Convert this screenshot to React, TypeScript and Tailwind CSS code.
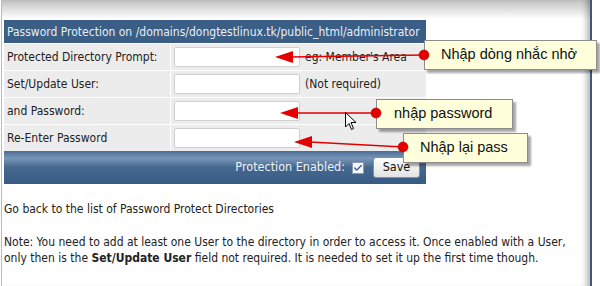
import { Check } from 'lucide-react';

const rows = [
  { label: 'Protected Directory Prompt:', note: "eg: Member's Area" },
  { label: 'Set/Update User:', note: '(Not required)' },
  { label: 'and Password:', note: '' },
  { label: 'Re-Enter Password', note: '' },
];

function Callout({ text, className }: { text: string; className: string }) {
  return (
    <div
      className={`absolute h-[30px] flex items-center bg-[#ffffdc] border border-[#8c8c8c] shadow-[3px_3px_2px_rgba(0,0,0,0.35)] font-['Liberation_Sans',Arial,sans-serif] text-[14.5px] text-[#111] ${className}`}
    >
      {text}
    </div>
  );
}

export default function App() {
  return (
    <div className="relative w-[600px] h-[286px] overflow-hidden bg-white font-['DejaVu_Sans_Condensed','DejaVu_Sans',sans-serif] text-[12px] text-[#222]">
      <div className="w-[591px] h-full ml-px border-l border-[#b4bcc8] border-r-2 border-r-[#3d5a7a] bg-[linear-gradient(to_bottom,#c2c2c2,#ffffff_19px)] shadow-[inset_-7px_0_6px_-4px_rgba(0,0,0,0.3)] pt-[20px] pl-[2px]">
        {/* table */}
        <div className="w-[422px] bg-[#ececec]">
          <div className="h-[23px] flex items-center pl-[3px] bg-[#3a5e86] text-[#e8eef5] text-[12px] whitespace-nowrap">
            Password Protection on /domains/dongtestlinux.tk/public_html/administrator
          </div>
          {rows.map((r) => (
            <div key={r.label} className="h-[27px] flex border-t border-white">
              <div className="w-[167px] flex items-center pl-[3px] border-r border-white">{r.label}</div>
              <div className="w-[131px] flex items-center pl-[3px]">
                <div className="w-[126px] h-[20px] bg-white border border-[#cfcfcf] rounded-[2px]" />
              </div>
              <div className="flex items-center pl-[3px]">{r.note}</div>
            </div>
          ))}
          <div className="h-[33px] flex items-center justify-end gap-[7px] pr-[6px] bg-[linear-gradient(to_bottom,#4a6c94_0%,#7896b8_22%,#46688f_50%,#385b83_100%)] text-[#eef2f7]">
            <span className="text-[12.5px]">Protection Enabled:</span>
            <span className="w-[12px] h-[12px] flex items-center justify-center bg-[#f4f6f9] border border-[#8a9ab0]">
              <Check size={10} strokeWidth={3} color="#2a4fa0" />
            </span>
            <button className="w-[47px] h-[21px] ml-[2px] rounded-[3px] border border-[#8e8e8e] bg-[linear-gradient(to_bottom,#ffffff,#e3e3e3)] text-[12.5px] text-[#111]">
              Save
            </button>
          </div>
        </div>

        <div className="mt-[17px] leading-[16px]">Go back to the list of Password Protect Directories</div>
        <div className="mt-[17px] leading-[16px] whitespace-nowrap">
          Note: You need to add at least one User to the directory in order to access it. Once enabled with a User,
          <br />
          only then is the <b>Set/Update User</b> field not required. It is needed to set it up the first time though.
        </div>
      </div>

      {/* connector lines and arrow heads */}
      <svg className="absolute inset-0 pointer-events-none" width="600" height="286">
        <g stroke="#e40000" strokeWidth="1.3">
          <line x1="290" y1="57" x2="424" y2="55" />
          <line x1="296" y1="113" x2="376" y2="113" />
          <line x1="310" y1="142" x2="403" y2="147" />
        </g>
        <g fill="#e40000">
          <polygon points="275,57 293,51 293,63" />
          <polygon points="280,113 298,107 298,119" />
          <polygon points="294,142 312,136 312,148" />
        </g>
      </svg>

      <Callout text="Nhập dòng nhắc nhở" className="left-[424px] top-[40px] w-[173px] pl-[16px]" />
      <Callout text="nhập password" className="left-[376px] top-[99px] w-[137px] pl-[17px]" />
      <Callout text="Nhập lại pass" className="left-[403px] top-[133px] w-[125px] pl-[16px]" />

      {/* dots and cursor on top */}
      <svg className="absolute inset-0 pointer-events-none" width="600" height="286">
        <g fill="#e40000" stroke="#b00000" strokeWidth="0.6">
          <circle cx="424" cy="55" r="5" />
          <circle cx="376" cy="113" r="5" />
          <circle cx="403" cy="147" r="5" />
        </g>
        <path
          d="M345.5 112.5 L345.5 127 L349 123.5 L351.5 129.5 L353.5 128.5 L351 122.5 L356 122.5 Z"
          fill="#fff"
          stroke="#000"
          strokeWidth="1"
          strokeLinejoin="round"
        />
      </svg>
    </div>
  );
}
